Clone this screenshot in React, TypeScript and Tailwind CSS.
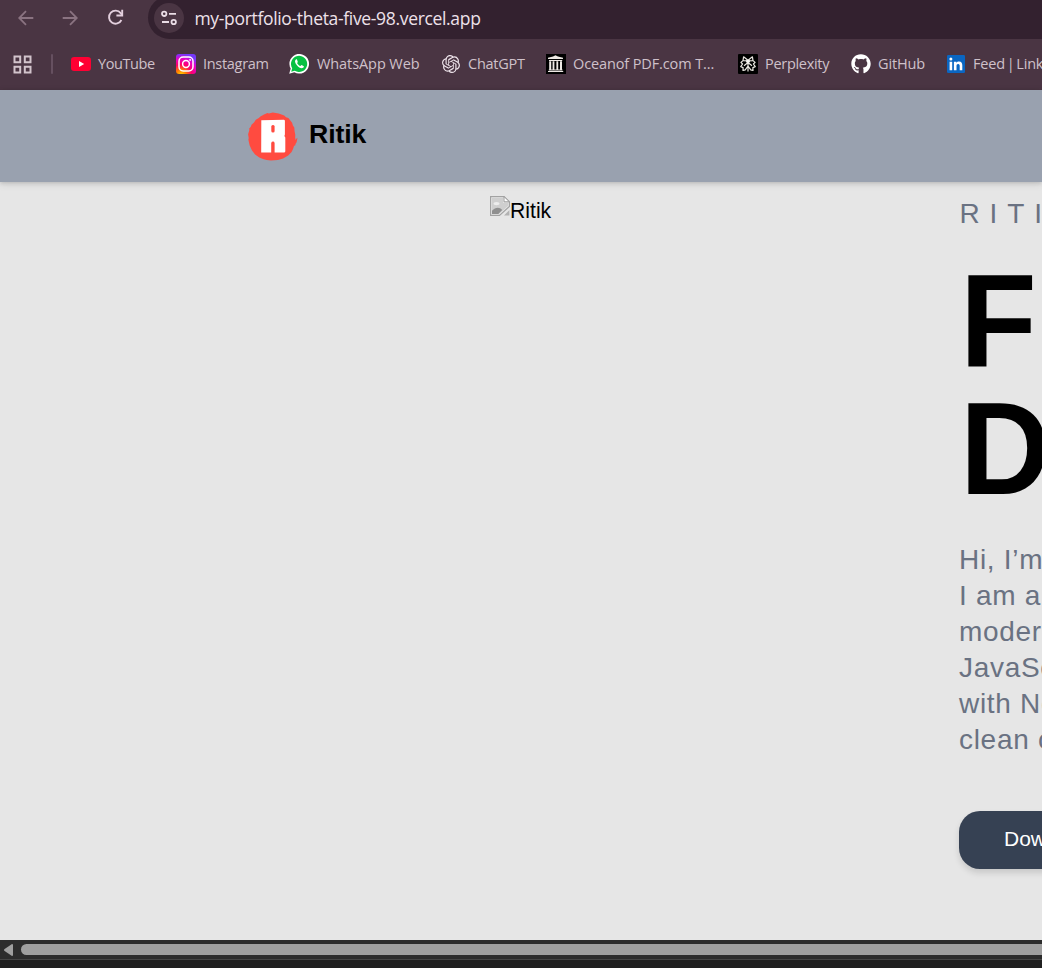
import type { ReactNode } from "react";
import { FaGithub } from "react-icons/fa";
import { SiOpenai } from "react-icons/si";

function BackIcon({ flip = false }: { flip?: boolean }) {
  return (
    <svg width="16" height="16" viewBox="0 0 16 16" fill="none" stroke="#8a7381" strokeWidth="1.8" className={flip ? "rotate-180" : ""}>
      <path d="M15.3 8H1.5M8 1.2 1.2 8 8 14.8" />
    </svg>
  );
}

function ReloadIcon() {
  return (
    <svg width="17" height="17" viewBox="0 0 17 17" fill="none" stroke="#e3cfdd" strokeWidth="1.9">
      <path d="M14.4 11A6.5 6.5 0 1 1 13.7 4.2L15.2 6" />
      <path d="M15.2 .8V6.5H9.4" />
    </svg>
  );
}

function TuneIcon() {
  return (
    <svg width="16" height="16" viewBox="0 0 16 16" fill="none" stroke="#eadde6" strokeWidth="1.8">
      <circle cx="3.2" cy="3.8" r="2.2" />
      <path d="M8 3.8h7M1 12h7" />
      <circle cx="12.7" cy="12" r="2.2" />
    </svg>
  );
}

function AppsIcon() {
  return (
    <svg width="19" height="19" viewBox="0 0 19 19" fill="none" stroke="#d2c4cc" strokeWidth="2" className="shrink-0">
      <path d="M1.5 1.5h5.7v5.7H1.5zM11.8 1.5h5.7v5.7h-5.7zM1.5 11.8h5.7v5.7H1.5zM11.8 11.8h5.7v5.7h-5.7z" />
    </svg>
  );
}

function YoutubeIcon() {
  return (
    <svg width="20" height="20" viewBox="0 0 20 20">
      <rect y="3" width="20" height="14" rx="3.2" fill="#ff0033" />
      <path d="M8 7v6l5.2-3z" fill="#fff" />
    </svg>
  );
}

function InstagramIcon() {
  return (
    <svg width="20" height="20" viewBox="0 0 20 20" fill="none">
      <defs>
        <radialGradient id="ig" cx="0.25" cy="1.05" r="1.05">
          <stop offset="0" stopColor="#ffd600" />
          <stop offset=".25" stopColor="#ff7a00" />
          <stop offset=".5" stopColor="#ff0069" />
          <stop offset=".78" stopColor="#e600c8" />
          <stop offset="1" stopColor="#7638fa" />
        </radialGradient>
      </defs>
      <rect width="20" height="20" rx="3" fill="url(#ig)" />
      <rect x="3" y="3" width="14" height="14" rx="4.2" stroke="#fff" strokeWidth="1.5" />
      <circle cx="10" cy="10" r="3.4" stroke="#fff" strokeWidth="1.5" />
      <circle cx="14.1" cy="5.9" r=".95" fill="#fff" />
    </svg>
  );
}

function WhatsappIcon() {
  return (
    <svg width="20" height="20" viewBox="0 0 20 20">
      <path d="M.2 19.8 1.7 14.6A9.8 9.8 0 1 1 5.4 18.3z" fill="#fff" />
      <path d="M2.2 17.8 3.2 14.2A8.1 8.1 0 1 1 5.8 16.8z" fill="#07c143" />
      <path d="M7.2 5.2C5.5 6.2 5.6 8.4 7.7 11c2.3 2.9 4.9 4 6.4 2.8.7-.5.9-1.3.7-1.6l-2.1-1.1c-.5-.2-.9 1-1.3 1-1 0-3.2-2.1-3.3-3 0-.4.8-.8.7-1.2L8 5.5c-.1-.3-.4-.4-.8-.3z" fill="#fff" />
    </svg>
  );
}

function MuseumIcon() {
  return (
    <svg width="20" height="20" viewBox="0 0 20 20">
      <path fill="#000" d="M0 0h20v20H0z" />
      <path fill="#eee9e5" d="M2 5V3.8L7 2.4l2.5-1.1L12 2.4l5 1.4V5zM3 6h13.2v1H3zM3.2 7.2h2v8.3h-2zM6.6 7.2h1.8v8.3H6.6zM10.4 7.2h1.8v8.3h-1.8zM14 7.2h2v8.3h-2zM2.8 15.5h13.7v1H2.8zM2 17h15.2v1H2z" />
    </svg>
  );
}

function PerplexityIcon() {
  return (
    <svg width="20" height="20" viewBox="0 0 20 20" fill="none" stroke="#ebe8e2" strokeWidth="1.2" strokeLinejoin="round">
      <rect width="20" height="20" rx="1" fill="#000" stroke="none" />
      <path d="M10 7v10.6M10 7 8.7 5.2 5.6 2.8 5 6.6 2.9 8.4 4.6 10 2.7 12.6l2.4 1L5 16.4l2.6-.6M10 7l1.3-1.8 3.1-2.4.6 3.8 2.1 1.8-1.7 1.6 1.9 2.6-2.4 1 .1 2.8-2.6-.6M10 8.5l-4 3.2M10 8.5l4 3.2M10 12l-2.6 3.7M10 12l2.6 3.7M5.2 6.7 10 7l4.8-.3" />
      <circle cx="10" cy="7.2" r="1.9" fill="#f5f3ef" stroke="none" />
    </svg>
  );
}

function LinkedinIcon() {
  return (
    <svg width="18" height="18" viewBox="0 0 18 18">
      <rect width="18" height="18" rx="1.2" fill="#0a66c2" />
      <path fill="#fff" d="M2.6 6.8h2.6v8.5H2.6zM6.9 6.8h2.5V8c.5-.9 1.4-1.4 2.6-1.4 2.7 0 3.3 1.7 3.3 4v4.7h-2.6v-4.2c0-1.2-.2-2.2-1.5-2.2s-1.7.9-1.7 2.2v4.2H6.9z" />
      <circle cx="3.9" cy="4.1" r="1.5" fill="#fff" />
    </svg>
  );
}

function LogoMark() {
  return (
    <svg width="52" height="50" viewBox="0 0 52 50" className="shrink-0">
      <path
        fill="#ff4b40"
        d="M17 3.4l3.4-1.5 1.5.7 3.8-1 6 1 5.5 1.9 1.8 1.7 2.4.8 3.7 4.7.8 2.7 1.4 2.2.3 3.6.7 3.5-.1 2.8.4 2.4 1.5-2.1.3.5-.8 4-1.3 1.9.3.7-1.6 1.2-1 3-1.4 2.9-3.4 3.6-5.1 3-5.2 1.5-7 .3-4.2-.5-3-.6-4.4-1.9-4.2-3-3.1-4-2.4-5.1-1.2-5.5.3-1.8-.6-3.8 1.4-4.6-.6-.6 1.9-2.3.7-1.9 2.5-2.3 1.8-2.7 3-1.9 1.6-1.4z"
      />
      <path fill="#fff" d="M14.3 9.2 37 8.8 37.9 9.5V23.5L37.4 25 38.3 26.5V40.5L37.5 41.4H27.6V32Q27.3 30.6 26 30.6T24.2 32V41.4H14.2z" />
      <rect x="24.3" y="14" width="3.3" height="7.4" rx="1.5" fill="#ff4b40" />
    </svg>
  );
}

function BrokenImageIcon() {
  return (
    <svg width="20" height="20" viewBox="0 0 20 20" className="shrink-0">
      <path d="M.6.6H14l5.4 5.2v4.7L9.5 19.4H.6z" fill="#e9e9e9" stroke="#a2a2a2" strokeWidth="1.2" />
      <path d="M2 2h11v4.8h5v3.2l-9.1 8H2z" fill="#cfcfcf" />
      <path d="M2 18v-3.2c3.2-3.3 7.1-4.3 10.2-.8L8.3 18z" fill="#8f8f8f" />
      <ellipse cx="6.5" cy="7.6" rx="3" ry="1.7" fill="#ededed" />
      <path d="M14 .6v5.2h5.4z" fill="#fff" stroke="#9a9a9a" />
      <path d="M19.4 14v5.4H14z" fill="#b2b2b2" />
    </svg>
  );
}

const chromeFont = "font-['Open_Sans','Noto_Sans',sans-serif]";

function Bookmark({ icon, className, textClass, children }: { icon: ReactNode; className: string; textClass: string; children: string }) {
  return (
    <div className={`flex h-5 shrink-0 items-center gap-[7px] ${className}`}>
      <span className="flex w-5 shrink-0 justify-center">{icon}</span>
      <span className={`whitespace-nowrap text-[14.5px] leading-5 text-[#cfc1ca] ${textClass}`}>{children}</span>
    </div>
  );
}

function BrowserChrome() {
  return (
    <div className={`h-[90px] shrink-0 bg-[#4a3543] ${chromeFont}`}>
      <div className="flex h-[39px] pl-[18px]">
        <div className="flex h-[35px] w-[130px] shrink-0 items-center">
          <BackIcon />
          <span className="ml-[28px]"><BackIcon flip /></span>
          <span className="ml-[29px]"><ReloadIcon /></span>
        </div>
        <div className="-mt-1 flex h-[43px] grow items-center rounded-l-[22px] bg-[#33212f] pl-[6px]">
          <span className="flex size-[30px] shrink-0 items-center justify-center rounded-full bg-[#4a3543]"><TuneIcon /></span>
          <span className="ml-[10.5px] pt-[2px] text-[17.5px] tracking-[-0.33px] text-[#eee1ea]">my-portfolio-theta-five-98.vercel.app</span>
        </div>
      </div>
      <div className="flex h-[50px] items-center pl-[13px]">
        <AppsIcon />
        <span className="ml-[19px] h-5 w-[2px] shrink-0 rounded bg-[#665060]" />
        <Bookmark icon={<YoutubeIcon />} className="ml-[18px] w-[105px]" textClass="tracking-[-0.4px]">YouTube</Bookmark>
        <Bookmark icon={<InstagramIcon />} className="w-[113px]" textClass="tracking-[-0.3px]">Instagram</Bookmark>
        <Bookmark icon={<WhatsappIcon />} className="w-[152px]" textClass="pl-px tracking-[-0.08px]">WhatsApp Web</Bookmark>
        <Bookmark icon={<SiOpenai size={18} color="#eee4eb" />} className="w-[105px]" textClass="tracking-[-0.25px]">ChatGPT</Bookmark>
        <Bookmark icon={<MuseumIcon />} className="w-[192px]" textClass="tracking-[-0.12px]">Oceanof PDF.com T...</Bookmark>
        <Bookmark icon={<PerplexityIcon />} className="w-[113px]" textClass="tracking-[-0.3px]">Perplexity</Bookmark>
        <Bookmark icon={<FaGithub size={20} color="#fff" />} className="w-[95px]" textClass="tracking-[-0.15px]">GitHub</Bookmark>
        <Bookmark icon={<LinkedinIcon />} className="" textClass="tracking-[-0.2px] [word-spacing:-1.7px]">Feed | LinkedIn</Bookmark>
      </div>
    </div>
  );
}

export default function App() {
  return (
    <div className="flex h-[968px] w-[1042px] flex-col overflow-hidden bg-[#e6e6e6] font-['Liberation_Sans',Arial,sans-serif]">
      <BrowserChrome />
      <header className="z-10 flex h-[92px] shrink-0 items-center bg-[#99a1af] pl-[247px] shadow-[0_1px_4px_rgba(0,0,0,0.14),0_2px_8px_rgba(0,0,0,0.1)]">
        <LogoMark />
        <span className="ml-[10px] pb-[4px] text-[26.7px] leading-9 font-bold tracking-[-0.1px] text-black">Ritik</span>
      </header>
      <main className="flex h-[758px] shrink-0 overflow-hidden pl-[490px] pt-[14px]">
        <div className="flex w-[469px] shrink-0 items-start text-[21.2px] leading-[30px] text-black">
          <BrokenImageIcon />
          <span>Ritik</span>
        </div>
        <section className="w-[700px] shrink-0 text-[#6a7282]">
          <p className="pl-[0.5px] text-[28px] leading-[35px] tracking-[9.9px]">RITIK</p>
          <h1 className="mt-[25px] origin-top-left scale-x-[0.98] scale-y-[1.035] pl-px text-[128px] leading-[123.7px] font-bold text-black">
            Frontend<br />Developer
          </h1>
          <p className="mt-[38.6px] text-[28px] leading-9 tracking-[0.7px] whitespace-nowrap">
            Hi, I’m Ritik<br />I am a developer building<br />modern web apps with<br />JavaScript and React<br />with Node.js, writing<br />clean code
          </p>
          <button className="mt-[53px] flex h-[58px] items-center rounded-[21px] bg-[#364153] px-[45px] pb-[2px] text-[21px] text-white shadow-[0_4px_6px_rgba(0,0,0,0.13)]">
            Download CV
          </button>
        </section>
      </main>
      <footer className="h-7 shrink-0 bg-[#202020]">
        <div className="flex h-[19px] items-center gap-2 bg-[#2c2c2c] pl-1">
          <svg width="9" height="12" viewBox="0 0 9 12"><path d="M8 0Q9 0 9 1v10q0 1-1 1L.6 7q-1.2-1 0-2z" fill="#9f9f9f" /></svg>
          <div className="h-[11px] grow rounded-l-full bg-[#9f9f9f]" />
        </div>
        <div className="h-px bg-[#454545]" />
      </footer>
    </div>
  );
}
